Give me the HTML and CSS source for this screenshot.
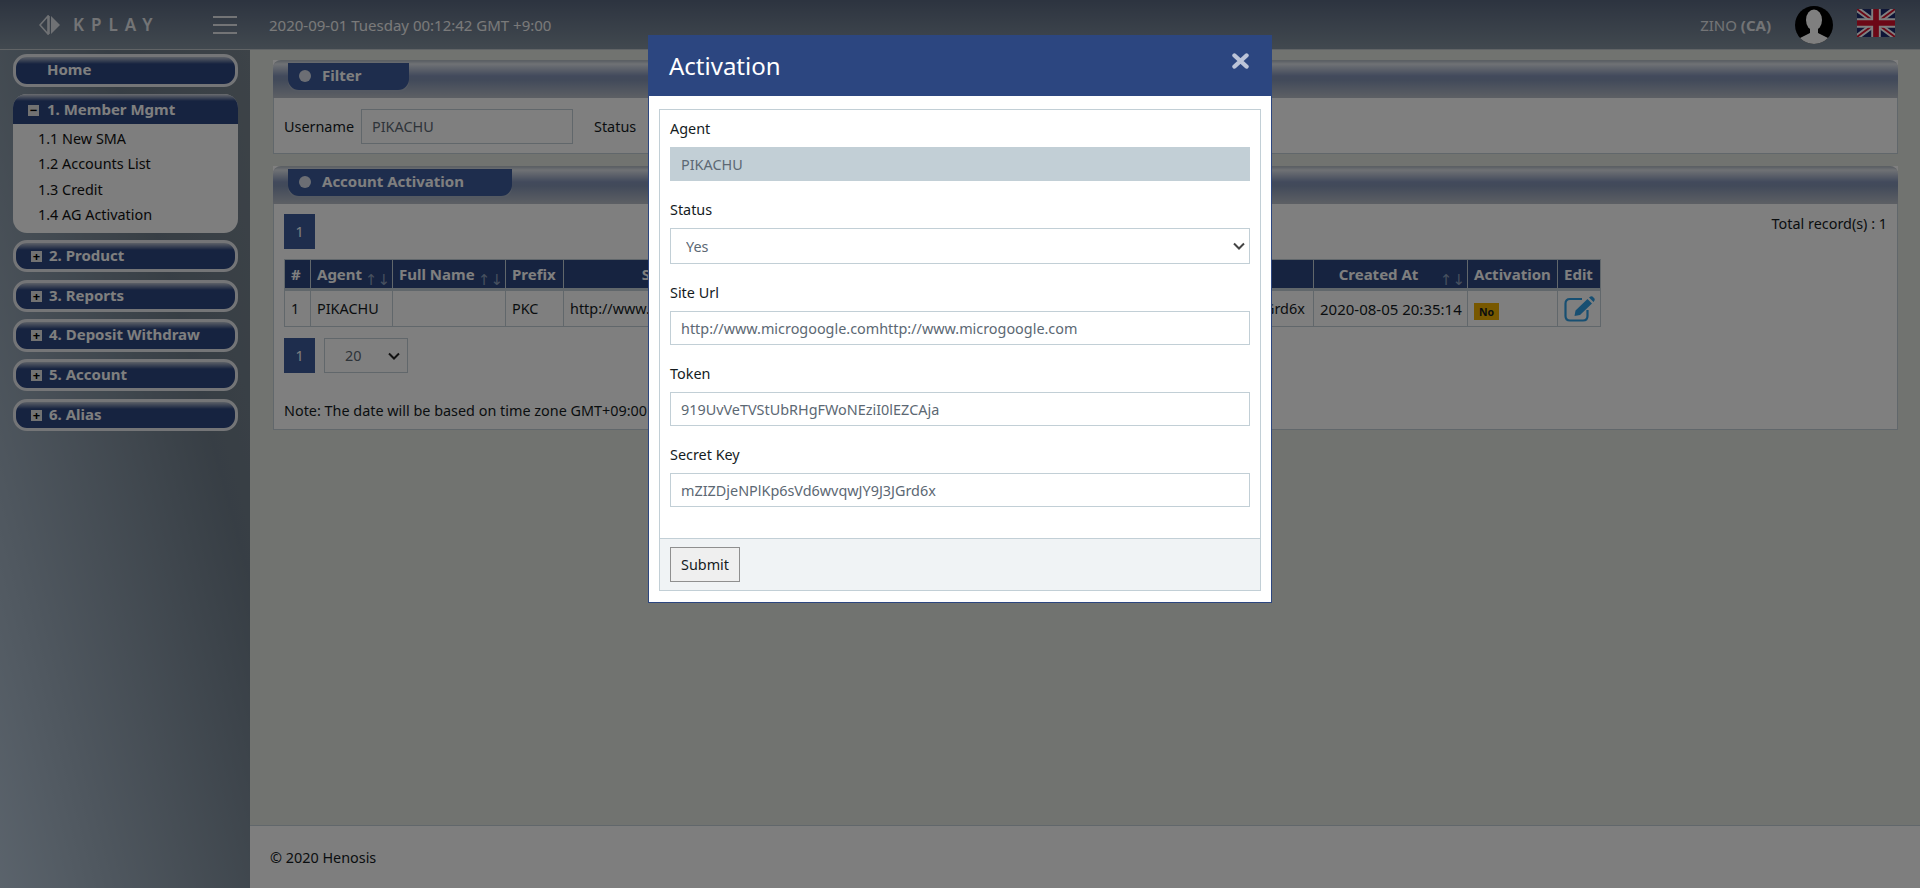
FILE: index.html
```html
<!DOCTYPE html>
<html lang="en">
<head>
    <meta charset="UTF-8">
    <title>Activation</title>
    <link rel="stylesheet" href="styles.css">
</head>
<body>
    <header class="topbar">
        <div class="logo">
            <svg class="logo-mark" width="22" height="20" viewBox="0 0 22 20">
                <path d="M9 1 L1 10 L9 19 Z M10 1 V19" fill="none" stroke="#dfe3e8" stroke-width="1.6"/>
                <path d="M12 1 L21 10 L12 19 Z" fill="#dfe3e8"/>
            </svg>
            <span class="logo-text">KPLAY</span>
        </div>
        <div class="burger"><i></i><i></i><i></i></div>
        <div class="clock">2020-09-01 Tuesday 00:12:42 GMT +9:00</div>
        <div class="user">ZINO <b>(CA)</b></div>
        <svg class="avatar" width="38" height="38" viewBox="0 0 38 38">
            <defs><clipPath id="av"><ellipse cx="19" cy="19" rx="19" ry="19"/></clipPath></defs>
            <ellipse cx="19" cy="19" rx="19" ry="19" fill="#000"/>
            <g clip-path="url(#av)" fill="#fff">
                <ellipse cx="19" cy="14" rx="8" ry="10.5"/>
                <path d="M15 21 H23 V27 L35 33 V38 H3 V33 L15 27 Z"/>
            </g>
        </svg>
        <svg class="flag" width="38" height="28" viewBox="0 0 60 44">
            <rect width="60" height="44" fill="#1c2a6e"/>
            <path d="M0 0 L60 44 M60 0 L0 44" stroke="#fff" stroke-width="9"/>
            <path d="M0 0 L60 44 M60 0 L0 44" stroke="#d8102c" stroke-width="3"/>
            <path d="M30 0 V44 M0 22 H60" stroke="#fff" stroke-width="15"/>
            <path d="M30 0 V44 M0 22 H60" stroke="#d8102c" stroke-width="9"/>
        </svg>
    </header>

    <div class="layout">
        <nav class="sidebar">
            <div class="menu-pill"><span class="menu-home">Home</span></div>
            <div class="menu-group">
                <div class="menu-head"><span class="tog">&minus;</span>1. Member Mgmt</div>
                <a>1.1 New SMA</a>
                <a>1.2 Accounts List</a>
                <a>1.3 Credit</a>
                <a>1.4 AG Activation</a>
            </div>
            <div class="menu-pill"><span class="tog">+</span>2. Product</div>
            <div class="menu-pill"><span class="tog">+</span>3. Reports</div>
            <div class="menu-pill"><span class="tog">+</span>4. Deposit Withdraw</div>
            <div class="menu-pill"><span class="tog">+</span>5. Account</div>
            <div class="menu-pill"><span class="tog">+</span>6. Alias</div>
        </nav>

        <main class="main">
            <div class="content">
                <section class="panel">
                    <div class="panel-head"><div class="panel-tab"><i class="dot"></i>Filter</div></div>
                    <div class="panel-body filter">
                        <label>Username</label>
                        <input class="field-user" value="PIKACHU">
                        <label class="lbl-status">Status</label>
                    </div>
                </section>

                <section class="panel">
                    <div class="panel-head"><div class="panel-tab"><i class="dot"></i>Account Activation</div></div>
                    <div class="panel-body list">
                        <div class="list-top">
                            <span class="page-btn">1</span>
                            <span>Total record(s) : 1</span>
                        </div>
                        <table class="grid">
                            <colgroup>
                                <col class="c1"><col class="c2"><col class="c3"><col class="c4"><col class="c5">
                                <col class="c6"><col class="c7"><col class="c8"><col class="c9"><col class="c10">
                            </colgroup>
                            <tr>
                                <th>#</th>
                                <th>Agent<span class="sort">↑↓</span></th>
                                <th>Full Name<span class="sort">↑↓</span></th>
                                <th>Prefix</th>
                                <th class="mid">Site Url</th>
                                <th class="mid">Token</th>
                                <th class="mid">Secret Key</th>
                                <th class="mid created">Created At<span class="sort">↑↓</span></th>
                                <th>Activation</th>
                                <th>Edit</th>
                            </tr>
                            <tr>
                                <td>1</td>
                                <td>PIKACHU</td>
                                <td></td>
                                <td>PKC</td>
                                <td>http://www.microgoogle.com</td>
                                <td class="tok">919UvVeTVStUbRHgFWoNEziI0lEZCAja</td>
                                <td class="sec">mZIZDjeNPlKp6sVd6wvqwJY9J3JGrd6x</td>
                                <td class="dt">2020-08-05 20:35:14</td>
                                <td><span class="badge">No</span></td>
                                <td class="edit">
                                    <svg width="32" height="26" viewBox="0 0 32 26">
                                        <path d="M18 3 H6 Q1.5 3 1.5 7.5 V20 Q1.5 24.5 6 24.5 H19 Q23.5 24.5 23.5 20 V14" fill="none" stroke="#2f9fe4" stroke-width="2.2"/>
                                        <path d="M10.5 20 L11.5 14.5 L23.5 3 L28 7.5 L16 19 Z M25 1.5 L26.5 .5 Q27.5 0 28.5 .5 L30.5 2.5 Q31 3.5 30.5 4.5 L29.5 6 Z" fill="#2f9fe4"/>
                                    </svg>
                                </td>
                            </tr>
                        </table>
                        <div class="pager">
                            <span class="page-btn">1</span>
                            <select class="page-size"><option>20</option></select>
                        </div>
                        <p class="note">Note: The date will be based on time zone GMT+09:00</p>
                    </div>
                </section>
            </div>
            <footer class="foot">© 2020 Henosis</footer>
        </main>
    </div>

    <div class="backdrop"></div>

    <div class="modal">
        <div class="modal-head">
            <h2>Activation</h2>
            <svg class="close" width="17" height="16" viewBox="0 0 17 16">
                <path d="M2.5 2.5 L14.5 13.5 M14.5 2.5 L2.5 13.5" stroke="#bcc4d8" stroke-width="4.4" stroke-linecap="round"/>
            </svg>
        </div>
        <div class="modal-body">
            <form class="card">
                <div class="card-body">
                    <div class="group">
                        <label>Agent</label>
                        <input class="ctl ctl-off" value="PIKACHU" readonly>
                    </div>
                    <div class="group">
                        <label>Status</label>
                        <select class="ctl ctl-sel"><option>Yes</option></select>
                    </div>
                    <div class="group">
                        <label>Site Url</label>
                        <input class="ctl" value="http://www.microgoogle.comhttp://www.microgoogle.com">
                    </div>
                    <div class="group">
                        <label>Token</label>
                        <input class="ctl" value="919UvVeTVStUbRHgFWoNEziI0lEZCAja">
                    </div>
                    <div class="group">
                        <label>Secret Key</label>
                        <input class="ctl" value="mZIZDjeNPlKp6sVd6wvqwJY9J3JGrd6x">
                    </div>
                </div>
                <div class="card-foot">
                    <button type="button" class="submit">Submit</button>
                </div>
            </form>
        </div>
    </div>
</body>
</html>
```

FILE: styles.css
```css
*{
    box-sizing:border-box;
}
html,body{
    height:100%;
}
body{
    margin:0;
    overflow:hidden;
    font-family:"Noto Sans","DejaVu Sans",sans-serif;
    font-size:14.4px;
    color:#151b1e;
    background:#e4e5e6;
}

/* top bar */
.topbar{
    height:50px;
    display:flex;
    align-items:center;
    color:#fff;
    background:linear-gradient(#5a6880,#83929f);
    border-bottom:1px solid #c2c8cc;
}
.logo{
    width:213px;
    padding-left:39px;
    display:flex;
    align-items:center;
    gap:12px;
}
.logo-text{
    font-size:17px;
    letter-spacing:7px;
    font-weight:600;
    color:#e6e9ec;
}
.burger{
    width:24px;
    margin-right:32px;
    display:flex;
    flex-direction:column;
    gap:6px;
}
.burger i{
    height:2px;
    background:#e6e9ec;
}
.clock{
    flex:1;
    font-size:15px;
    color:#f4f4f4;
}
.user{
    font-size:15px;
    color:#e6e9ec;
    margin-right:24px;
}
.avatar{
    margin-right:24px;
}
.flag{
    margin-right:25px;
    margin-top:-4px;
}

/* page */
.layout{
    display:flex;
    height:838px;
}
.sidebar{
    width:250px;
    padding:4px 12px 0 13px;
    background:linear-gradient(75deg,#b6c7d8,#6f7d8a 70%,#7a8690);
    display:flex;
    flex-direction:column;
    gap:7.2px;
}
.menu-pill{
    height:32.5px;
    border:3px solid #e8eaee;
    border-radius:14px;
    background:linear-gradient(#b9c1cf,#2c4680 7px);
    color:#fff;
    font-size:15px;
    font-weight:700;
    padding-left:15px;
    line-height:24px;
    white-space:nowrap;
}
.menu-home{
    padding-left:16px;
}
.tog{
    display:inline-block;
    width:11px;
    height:11px;
    margin-right:7px;
    background:#e4e4e4;
    color:#000;
    font-size:13px;
    line-height:10px;
    text-align:center;
    font-weight:700;
}
.menu-group{
    height:139px;
    border-radius:14px;
    background:#fcfcfc;
    overflow:hidden;
    display:flex;
    flex-direction:column;
    flex:none;
}
.menu-group a{
    height:25.5px;
    line-height:25.5px;
    padding-left:25px;
    color:#111;
}
.menu-head{
    height:30px;
    padding:4px 0 0 15px;
    margin-bottom:2px;
    background:linear-gradient(#d4d8de,#2c4680 7px);
    color:#fff;
    font-size:15px;
    font-weight:700;
    line-height:23px;
}
.menu-head .tog{
    margin-right:8px;
}
.main{
    flex:1;
    display:flex;
    flex-direction:column;
    background:#e2e6e0;
}
.content{
    flex:1;
    padding:10px 22px 0 23px;
    display:flex;
    flex-direction:column;
    gap:12px;
}
.foot{
    height:63px;
    padding:22px 0 0 20px;
    background:#fcfcfc;
    border-top:1px solid #c2cfd6;
}

/* panels */
.panel{
    background:#fff;
}
.panel-head{
    height:38px;
    padding:2px 0 0 15px;
    border-radius:8px 8px 0 0;
    background:linear-gradient(#b8c0cc 0,#e0e4ea 3px,#8494b8 15px,#8494b4 19px,#b8bec8 36px);
    border-top:1px solid #b8c0c8;
}
.panel-tab{
    display:inline-block;
    height:27px;
    line-height:24px;
    padding:0 48px 0 34px;
    position:relative;
    color:#fff;
    font-size:15px;
    font-weight:700;
    background:#3c5a9a;
    border-radius:0 0 11px 11px;
    box-shadow:0 2px 0 #a8b2c4;
}
.dot{
    position:absolute;
    left:11px;
    top:7px;
    width:12px;
    height:12px;
    border-radius:50%;
    background:#d8dde8;
}
.panel-body{
    border:1px solid #c2cfd6;
    border-top:0;
}
.filter{
    height:56px;
    padding-top:11px;
    padding-left:10px;
    display:flex;
    align-items:flex-start;
}
.filter label{
    line-height:35px;
    margin-right:7px;
}
.field-user{
    width:212px;
    height:35px;
    padding:0 10px;
    border:1px solid #c2cfd6;
    font:inherit;
    color:#5c6873;
}
.filter .lbl-status{
    margin-left:21px;
}
.list{
    height:226px;
    padding:10px 10px 0;
}
.list-top{
    display:flex;
    justify-content:space-between;
}
.page-btn{
    display:inline-block;
    width:31px;
    height:35px;
    line-height:35px;
    text-align:center;
    background:#3c5a9a;
    color:#fff;
}

/* table */
.grid{
    margin-top:10px;
    border-collapse:collapse;
    table-layout:fixed;
    width:1316px;
}
.c1{width:26px}
.c2{width:82px}
.c3{width:113px}
.c4{width:58px}
.c5{width:211px}
.c6{width:263px}
.c7{width:276px}
.c8{width:154px}
.c9{width:90px}
.c10{width:43px}
.grid th{
    height:30px;
    padding:0 6px;
    background:#2c4680;
    color:#fff;
    font-size:15px;
    font-weight:700;
    text-align:left;
    border:1px solid #c2cfd6;
    border-bottom-width:3px;
    white-space:nowrap;
    position:relative;
}
.grid th.mid{
    text-align:center;
}
.grid th.created{
    padding-right:30px;
}
.grid td{
    height:37px;
    padding:0 6px;
    border:1px solid #c2cfd6;
    white-space:nowrap;
    overflow:hidden;
}
.grid td.tok{
    padding:0;
}
.grid td.sec{
    padding-left:12px;
    padding-right:0;
}
.grid td.dt{
    font-size:15px;
}
.sort{
    position:absolute;
    right:2px;
    top:9px;
    color:#8ea0bc;
    font-weight:400;
    font-size:15px;
}
.badge{
    display:inline-block;
    padding:0 5px;
    height:17px;
    line-height:18px;
    font-size:10.5px;
    font-weight:700;
    background:#f0b000;
    color:#151b1e;
    vertical-align:-3px;
}
.edit svg{
    display:block;
}
.pager{
    margin-top:11px;
    display:flex;
    gap:9px;
}
.page-size{
    appearance:none;
    width:84px;
    height:35px;
    padding-left:20px;
    border:1px solid #c2cfd6;
    font:inherit;
    color:#5c6873;
    background:#fff url("data:image/svg+xml,%3Csvg xmlns='http://www.w3.org/2000/svg' width='12' height='8'%3E%3Cpath d='M1 1.5 L6 6.5 L11 1.5' fill='none' stroke='%23222' stroke-width='2'/%3E%3C/svg%3E") no-repeat right 7px center;
}
.note{
    margin:28px 0 0;
}

/* modal */
.backdrop{
    position:fixed;
    left:0;
    top:0;
    right:0;
    bottom:0;
    background:rgba(0,0,0,.5);
}
.modal{
    position:fixed;
    left:648px;
    top:35px;
    width:624px;
    height:568px;
    background:#fff;
    border:1px solid #2c4680;
    display:flex;
    flex-direction:column;
}
.modal-head{
    height:60px;
    padding:0 22px 0 20px;
    background:#2c4680;
    color:#fff;
    display:flex;
    justify-content:space-between;
}
.modal-head h2{
    margin:0;
    font-size:24px;
    font-weight:400;
    line-height:60px;
}
.close{
    margin-top:17px;
}
.modal-body{
    flex:1;
    padding:13px 10px;
}
.card{
    height:482px;
    border:1px solid #c2cfd6;
    display:flex;
    flex-direction:column;
}
.card-body{
    flex:1;
    padding:8px 10px 0;
}
.group{
    margin-bottom:18px;
}
.group label{
    display:block;
    height:21px;
    line-height:21px;
    margin-bottom:8px;
}
.ctl{
    display:block;
    width:100%;
    height:34px;
    padding:0 10px;
    border:1px solid #c2cfd6;
    background:#fff;
    font:inherit;
    color:#5c6873;
}
.ctl-off{
    background:#c2cfd6;
}
.ctl-sel{
    appearance:none;
    height:36px;
    padding-left:15px;
    background:#fff url("data:image/svg+xml,%3Csvg xmlns='http://www.w3.org/2000/svg' width='12' height='8'%3E%3Cpath d='M1 1.5 L6 6.5 L11 1.5' fill='none' stroke='%23444' stroke-width='2'/%3E%3C/svg%3E") no-repeat right 4px center;
}
.card-foot{
    height:52px;
    padding:8px 10px;
    background:#f0f3f5;
    border-top:1px solid #c2cfd6;
}
.submit{
    width:70px;
    height:35px;
    padding:0;
    font:inherit;
    color:#151b1e;
    background:#efefef;
    border:1px solid #8f8f8f;
}
```
